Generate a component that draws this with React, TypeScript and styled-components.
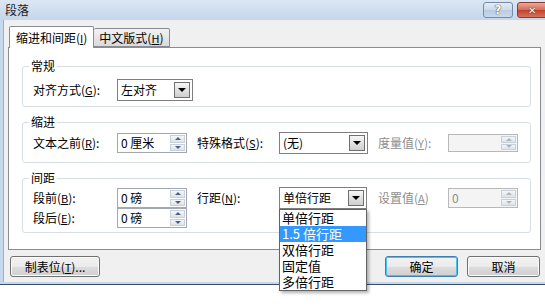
import React from 'react';
import styled, {createGlobalStyle} from 'styled-components';

const GlobalStyle = createGlobalStyle`
  html, body {
    margin: 0;
    padding: 0;
    background: #fff;
  }
  body {
    font-family: "Noto Sans CJK SC", "Liberation Sans", sans-serif;
    font-size: 12px;
    color: #000;
  }
`;

export default function App() {
    return (
        <Page>
            <GlobalStyle/>
            <Window>
                <TitleBar>
                    <Title>段落</Title>
                    <CaptionButton>?</CaptionButton>
                    <CaptionButton $close>✕</CaptionButton>
                </TitleBar>
                <Body>
                    <TabStrip>
                        <Tab $active>缩进和间距(<Key>I</Key>)</Tab>
                        <Tab>中文版式(<Key>H</Key>)</Tab>
                    </TabStrip>
                    <Panel>
                        <Group>
                            <Legend>常规</Legend>
                            <Row $top={6} $h={22}>
                                <FieldLabel $w={84}>对齐方式(<Key>G</Key>):</FieldLabel>
                                <Combo $w={76}>
                                    <ComboText>左对齐</ComboText>
                                    <DropButton><Caret/></DropButton>
                                </Combo>
                            </Row>
                            <Spacer $h={5}/>
                        </Group>
                        <Group>
                            <Legend>缩进</Legend>
                            <Row $top={3} $h={22}>
                                <FieldLabel $w={84}>文本之前(<Key>R</Key>):</FieldLabel>
                                <Cell $w={80}>
                                    <Spinner value="0 厘米"/>
                                </Cell>
                                <FieldLabel $w={82}>特殊格式(<Key>S</Key>):</FieldLabel>
                                <Cell $w={99}>
                                    <Combo $w={89}>
                                        <ComboText>(无)</ComboText>
                                        <DropButton><Caret/></DropButton>
                                    </Combo>
                                </Cell>
                                <FieldLabel $w={70} $disabled>度量值(<Key>Y</Key>):</FieldLabel>
                                <Spinner value="" disabled h={18}/>
                            </Row>
                            <Spacer $h={8}/>
                        </Group>
                        <Group>
                            <Legend>间距</Legend>
                            <Row $top={3} $h={20}>
                                <FieldLabel $w={84}>段前(<Key>B</Key>):</FieldLabel>
                                <Cell $w={80}>
                                    <Spinner value="0 磅"/>
                                </Cell>
                                <FieldLabel $w={82}>行距(<Key>N</Key>):</FieldLabel>
                                <Cell $w={99}>
                                    <ComboHolder>
                                        <Combo $w={88}>
                                            <ComboText>单倍行距</ComboText>
                                            <DropButton><Caret/></DropButton>
                                        </Combo>
                                        <DropList>
                                            {spacingOptions.map((o, i) => (
                                                <DropItem key={o} $selected={i === 1}>{o}</DropItem>
                                            ))}
                                        </DropList>
                                    </ComboHolder>
                                </Cell>
                                <FieldLabel $w={70} $disabled>设置值(<Key>A</Key>)</FieldLabel>
                                <Spinner value="0" disabled/>
                            </Row>
                            <Row $top={0} $h={20}>
                                <FieldLabel $w={84}>段后(<Key>E</Key>):</FieldLabel>
                                <Spinner value="0 磅"/>
                            </Row>
                            <Spacer $h={4}/>
                        </Group>
                    </Panel>
                    <Footer>
                        <Button $w={90}>制表位(<Key>T</Key>)...</Button>
                        <Grow/>
                        <Button $w={73} $default>确定</Button>
                        <Button $w={73}>取消</Button>
                    </Footer>
                </Body>
            </Window>
        </Page>
    );
}

const spacingOptions = ['单倍行距', '1.5 倍行距', '双倍行距', '固定值', '多倍行距'];

const Spinner = (props: { value: string, disabled?: boolean, h?: number }) => {
    return (
        <SpinBox $disabled={props.disabled} $h={props.h || 20}>
            <SpinValue $disabled={props.disabled}>{props.value}</SpinValue>
            <SpinArrows>
                <SpinHalf><ArrowUp $disabled={props.disabled}/></SpinHalf>
                <SpinHalf><ArrowDown $disabled={props.disabled}/></SpinHalf>
            </SpinArrows>
        </SpinBox>
    );
};

const Page = styled.div`
  width: 545px;
  height: 306px;
  background: #fff;
`;
const Window = styled.div`
  width: 545px;
  height: 285px;
  box-sizing: border-box;
  display: flex;
  flex-direction: column;
  background: #c6d8ec;
  border-bottom: 1px solid #3b4d64;
`;
const TitleBar = styled.div`
  height: 20px;
  flex: none;
  display: flex;
  align-items: flex-start;
  padding: 2px 0 0 5px;
  box-sizing: border-box;
  overflow: hidden;
  background: linear-gradient(#dbe7f4, #c4d6eb);
`;
const Title = styled.span`
  flex: 1;
  font-size: 12px;
  line-height: 16px;
  color: #1e1e1e;
`;
const CaptionButton = styled.div<{ $close?: boolean }>`
  width: ${p => p.$close ? '43px' : '30px'};
  height: 16px;
  flex: none;
  margin-left: ${p => p.$close ? '4px' : '0'};
  margin-right: ${p => p.$close ? '-15px' : '0'};
  box-sizing: border-box;
  border: 1px solid ${p => p.$close ? '#8e3b2b' : '#768aa5'};
  border-radius: 3px;
  display: flex;
  align-items: center;
  justify-content: ${p => p.$close ? 'flex-start' : 'center'};
  padding-left: ${p => p.$close ? '10px' : '0'};
  font-family: "DejaVu Sans", sans-serif;
  font-weight: bold;
  font-size: ${p => p.$close ? '10px' : '12px'};
  color: #fff;
  text-shadow: 0 0 1px #333, 0 0 1px #333;
  background: ${p => p.$close
          ? 'linear-gradient(#e9a99b, #d46a54 50%, #c2402a 51%, #d4735c)'
          : 'linear-gradient(#e4edf7, #cbd9ea 50%, #b9cbe2 51%, #c9d8ea)'};
`;
const Body = styled.div`
  flex: 1;
  margin: 0 0 2px 3px;
  border-left: 1px solid #9fb0c6;
  background: #f0f0f0;
  padding: 6px 5px 0 4px;
  display: flex;
  flex-direction: column;
`;
const TabStrip = styled.div`
  height: 21px;
  display: flex;
  align-items: flex-end;
  padding-left: 1px;
  position: relative;
  z-index: 1;
`;
const Tab = styled.div<{ $active?: boolean }>`
  height: ${p => p.$active ? '22px' : '19px'};
  margin-bottom: ${p => p.$active ? '-1px' : '0'};
  box-sizing: border-box;
  padding: ${p => p.$active ? '3px 6px 0 6px' : '1px 5px 0 5px'};
  border: 1px solid #898c95;
  border-bottom: ${p => p.$active ? 'none' : '1px solid #898c95'};
  border-left: ${p => p.$active ? '1px solid #898c95' : 'none'};
  border-radius: 2px 2px 0 0;
  line-height: 16px;
  font-size: 12px;
  white-space: nowrap;
  background: ${p => p.$active ? '#fff' : 'linear-gradient(#f2f2f2, #e6e6e6 50%, #dadada)'};
`;
const Key = styled.span`
  text-decoration: underline;
  font-size: 11px;
`;
const Panel = styled.div`
  width: 533px;
  height: 203px;
  box-sizing: border-box;
  border: 1px solid #898c95;
  background: #fff;
  padding: 11px 9px 0 13px;
  display: flex;
  flex-direction: column;
  gap: 8px;
`;
const Group = styled.fieldset`
  margin: 0;
  padding: 0;
  min-inline-size: 0;
  border: 1px solid #d5dfe5;
  border-radius: 3px;
`;
const Legend = styled.legend`
  margin-left: 6px;
  padding: 0 2px;
  font-size: 12px;
  line-height: 14px;
`;
const Row = styled.div<{ $top: number, $h: number }>`
  display: flex;
  align-items: center;
  height: ${p => p.$h}px;
  margin-top: ${p => p.$top}px;
  padding-left: 10px;
`;
const Spacer = styled.div<{ $h: number }>`
  height: ${p => p.$h}px;
`;
const FieldLabel = styled.span<{ $w: number, $disabled?: boolean }>`
  width: ${p => p.$w}px;
  flex: none;
  white-space: nowrap;
  line-height: 16px;
  color: ${p => p.$disabled ? '#8d8d8d' : '#000'};
`;
const Cell = styled.div<{ $w: number }>`
  width: ${p => p.$w}px;
  flex: none;
  display: flex;
  align-items: center;
`;
const Combo = styled.div<{ $w: number }>`
  width: ${p => p.$w}px;
  height: 22px;
  box-sizing: border-box;
  border: 1px solid #7f7f7f;
  background: #fff;
  display: flex;
  align-items: center;
  padding: 2px;
`;
const ComboText = styled.span`
  flex: 1;
  padding-left: 1px;
  line-height: 16px;
  white-space: nowrap;
`;
const DropButton = styled.div`
  width: 16px;
  height: 16px;
  box-sizing: border-box;
  border: 1px solid #6f6f6f;
  background: linear-gradient(#f7f7f7, #e2e2e2 50%, #cfcfcf);
  display: flex;
  align-items: center;
  justify-content: center;
`;
const Caret = styled.span`
  width: 0;
  height: 0;
  border-left: 4px solid transparent;
  border-right: 4px solid transparent;
  border-top: 4px solid #000;
`;
const ComboHolder = styled.div`
  position: relative;
  display: flex;
`;
const DropList = styled.div`
  position: absolute;
  left: 0;
  top: 100%;
  width: 88px;
  box-sizing: border-box;
  border: 1px solid #646464;
  background: #fff;
  box-shadow: 2px 2px 3px rgba(0, 0, 0, 0.3);
  z-index: 5;
`;
const DropItem = styled.div<{ $selected?: boolean }>`
  height: 16px;
  line-height: 16px;
  padding-left: 2px;
  font-size: 13px;
  white-space: nowrap;
  color: ${p => p.$selected ? '#fff' : '#000'};
  background: ${p => p.$selected ? '#3399ff' : 'transparent'};
`;
const SpinBox = styled.div<{ $disabled?: boolean, $h: number }>`
  width: 70px;
  height: ${p => p.$h}px;
  flex: none;
  box-sizing: border-box;
  border: 1px solid ${p => p.$disabled ? '#b8b8b8' : '#a3a8b0'};
  background: ${p => p.$disabled ? '#f4f4f4' : '#fff'};
  display: flex;
  padding: 1px;
`;
const SpinValue = styled.span<{ $disabled?: boolean }>`
  flex: 1;
  padding-left: 2px;
  line-height: 16px;
  white-space: nowrap;
  color: ${p => p.$disabled ? '#8d8d8d' : '#000'};
`;
const SpinArrows = styled.div`
  width: 15px;
  display: flex;
  flex-direction: column;
  gap: 1px;
`;
const SpinHalf = styled.div`
  flex: 1;
  box-sizing: border-box;
  border: 1px solid #c8d0da;
  background: linear-gradient(#f4f6f9, #dde3ea);
  display: flex;
  align-items: center;
  justify-content: center;
`;
const ArrowUp = styled.span<{ $disabled?: boolean }>`
  width: 0;
  height: 0;
  border-left: 3px solid transparent;
  border-right: 3px solid transparent;
  border-bottom: 3px solid ${p => p.$disabled ? '#b4b4b4' : '#4d6185'};
`;
const ArrowDown = styled.span<{ $disabled?: boolean }>`
  width: 0;
  height: 0;
  border-left: 3px solid transparent;
  border-right: 3px solid transparent;
  border-top: 3px solid ${p => p.$disabled ? '#b4b4b4' : '#4d6185'};
`;
const Footer = styled.div`
  display: flex;
  align-items: center;
  gap: 9px;
  margin-top: 6px;
  padding-left: 2px;
`;
const Grow = styled.div`
  flex: 1;
`;
const Button = styled.button<{ $w: number, $default?: boolean }>`
  width: ${p => p.$w}px;
  height: 21px;
  box-sizing: border-box;
  padding: 0;
  font-family: "Noto Sans CJK SC", "Liberation Sans", sans-serif;
  font-size: 12px;
  line-height: 16px;
  color: #000;
  border: 1px solid ${p => p.$default ? '#3c7fb1' : '#707070'};
  border-radius: 3px;
  background: linear-gradient(#f2f2f2, #ebebeb 50%, #dddddd 51%, #cfcfcf);
  box-shadow: inset 0 0 0 1px ${p => p.$default ? '#48c2f5' : '#fbfbfb'};
`;
